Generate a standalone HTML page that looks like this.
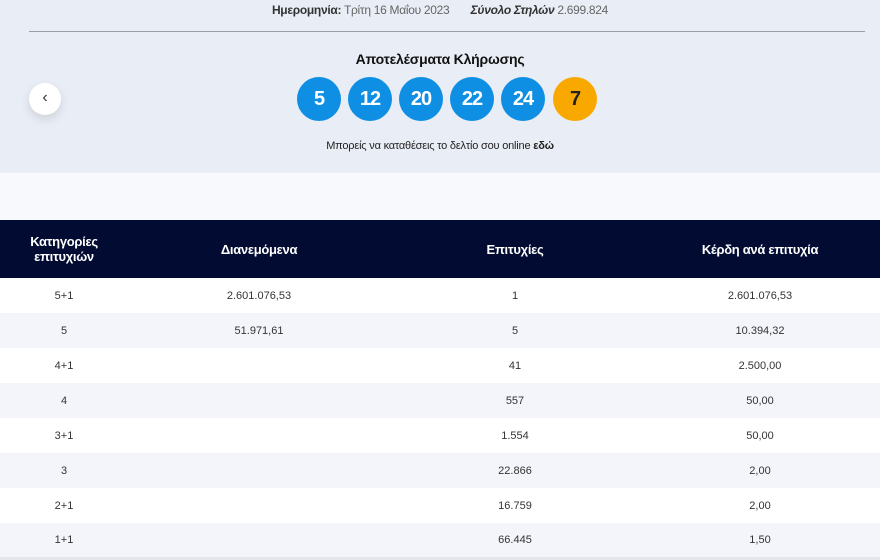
<!DOCTYPE html>
<html><head><meta charset="utf-8"><style>
*{margin:0;padding:0;box-sizing:border-box}
body{width:880px;height:558px;overflow:hidden;background:#fff;font-family:"Liberation Sans",sans-serif;color:#1b1b2b}
.top{position:absolute;left:0;top:0;width:880px;height:173px;background:#e9edf5;box-shadow:0 2px 6px rgba(0,0,0,.06)}
.band{position:absolute;left:0;top:173px;width:880px;height:47px;background:#f8f9fc}
.meta{position:absolute;top:3px;left:0;width:880px;text-align:center;font-size:12px;color:#666;letter-spacing:-.3px}
.meta b{color:#333}
.hr{position:absolute;left:29px;right:15px;top:31px;height:1px;background:#9aa0ab}
.title{position:absolute;top:51px;width:880px;text-align:center;font-size:14px;font-weight:bold;color:#111;letter-spacing:-.2px}
.ball{position:absolute;top:77px;width:44px;height:44px;border-radius:50%;background:#0e8fe3;color:#fff;font-weight:bold;font-size:20px;text-align:center;line-height:44px;letter-spacing:-1px}
.ball.o{background:#f9a800;color:#222}
.prev{position:absolute;left:29px;top:83px;width:32px;height:32px;border-radius:50%;background:#fff;box-shadow:0 4px 10px rgba(0,0,0,.12);text-align:center;line-height:30px;font-size:16px;color:#333}
.note{position:absolute;top:140px;width:880px;text-align:center;font-size:11px;color:#222;letter-spacing:-.2px}
table{position:absolute;top:220px;left:0;width:880px;border-collapse:collapse}
th{background:#020c33;color:#fff;font-size:13px;height:58px;font-weight:bold;padding:0;letter-spacing:-.3px}
td{height:35px;padding:0;text-align:center;font-size:11px;color:#333}
tr:nth-child(odd) td{background:#f3f5fa}
tr:last-child td{border-bottom:3px solid #e4e6ec}
</style></head><body>
<div class="top">
<div class="meta"><b>Ημερομηνία:</b> Τρίτη 16 Μαΐου 2023 &nbsp; &nbsp; &nbsp; <b><i>Σύνολο Στηλών</i></b> 2.699.824</div>
<div class="hr"></div>
<div class="title">Αποτελέσματα Κλήρωσης</div>
<div class="ball" style="left:297px">5</div>
<div class="ball" style="left:348px">12</div>
<div class="ball" style="left:399px">20</div>
<div class="ball" style="left:450px">22</div>
<div class="ball" style="left:501px">24</div>
<div class="ball o" style="left:553px">7</div>
<div class="prev">‹</div>
<div class="note">Μπορείς να καταθέσεις το δελτίο σου online <b>εδώ</b></div>
</div>
<div class="band"></div>
<table>
<tr><th style="width:128px">Κατηγορίες<br>επιτυχιών</th><th style="width:262px">Διανεμόμενα</th><th style="width:250px">Επιτυχίες</th><th>Κέρδη ανά επιτυχία</th></tr>
<tr><td>5+1</td><td>2.601.076,53</td><td>1</td><td>2.601.076,53</td></tr>
<tr><td>5</td><td>51.971,61</td><td>5</td><td>10.394,32</td></tr>
<tr><td>4+1</td><td></td><td>41</td><td>2.500,00</td></tr>
<tr><td>4</td><td></td><td>557</td><td>50,00</td></tr>
<tr><td>3+1</td><td></td><td>1.554</td><td>50,00</td></tr>
<tr><td>3</td><td></td><td>22.866</td><td>2,00</td></tr>
<tr><td>2+1</td><td></td><td>16.759</td><td>2,00</td></tr>
<tr><td>1+1</td><td></td><td>66.445</td><td>1,50</td></tr>
</table>
</body></html>
